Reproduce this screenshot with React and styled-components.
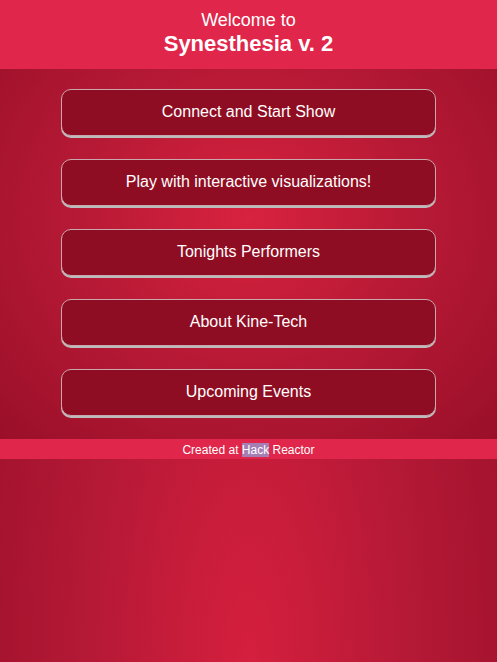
import React from "react";
import styled, { createGlobalStyle } from "styled-components";

const GlobalStyle = createGlobalStyle`
    html, body {
        margin: 0;
        padding: 0;
        height: 100%;
    }
    body {
        font-family: "Liberation Sans", Arial, sans-serif;
        color: #fff;
    }
    #root {
        min-height: 100%;
    }
`;

const links = [
    "Connect and Start Show",
    "Play with interactive visualizations!",
    "Tonights Performers",
    "About Kine-Tech",
    "Upcoming Events",
];

function App() {
    return (
        <Page>
            <GlobalStyle />
            <Header>
                <Welcome>Welcome to</Welcome>
                <Title>Synesthesia v. 2</Title>
            </Header>
            <Menu>
                {links.map((label) => (
                    <MenuButton key={label}>{label}</MenuButton>
                ))}
            </Menu>
            <Footer>
                Created at <Selected>Hack</Selected> Reactor
            </Footer>
        </Page>
    );
}

export default App;

const Page = styled.div`
    min-height: 100vh;
    display: flex;
    flex-direction: column;
    background: radial-gradient(ellipse farthest-corner at 50% 100%, #d51f3e 0%, #b51936 45%, #960e26 100%);
`;

const Header = styled.header`
    height: 69px;
    background-color: #e0264a;
    display: flex;
    flex-direction: column;
    align-items: center;
    padding-top: 10px;
    box-sizing: border-box;
    text-align: center;
`;

const Welcome = styled.div`
    font-size: 18px;
    line-height: 21px;
`;

const Title = styled.div`
    font-size: 22px;
    font-weight: bold;
    line-height: 25px;
`;

const Menu = styled.nav`
    display: flex;
    flex-direction: column;
    align-items: center;
    gap: 23px;
    padding: 20px 0 23px;
    background: radial-gradient(ellipse farthest-corner at 50% 40%, #d8223f 0%, #b61935 50%, #9a0f28 100%);
`;

const MenuButton = styled.button`
    width: 375px;
    height: 47px;
    box-sizing: border-box;
    background-color: #8f0d22;
    border: 1px solid #c9a7ad;
    border-radius: 10px;
    box-shadow: 0 2px 0 #bcbcbc;
    color: #fff;
    font-family: "Liberation Sans", Arial, sans-serif;
    font-size: 16px;
    cursor: pointer;
    padding: 0 0 1px;
`;

const Footer = styled.footer`
    height: 20px;
    line-height: 23px;
    background-color: #e0264a;
    text-align: center;
    font-size: 12px;
`;

const Selected = styled.span`
    background-color: #a57fb4;
`;
